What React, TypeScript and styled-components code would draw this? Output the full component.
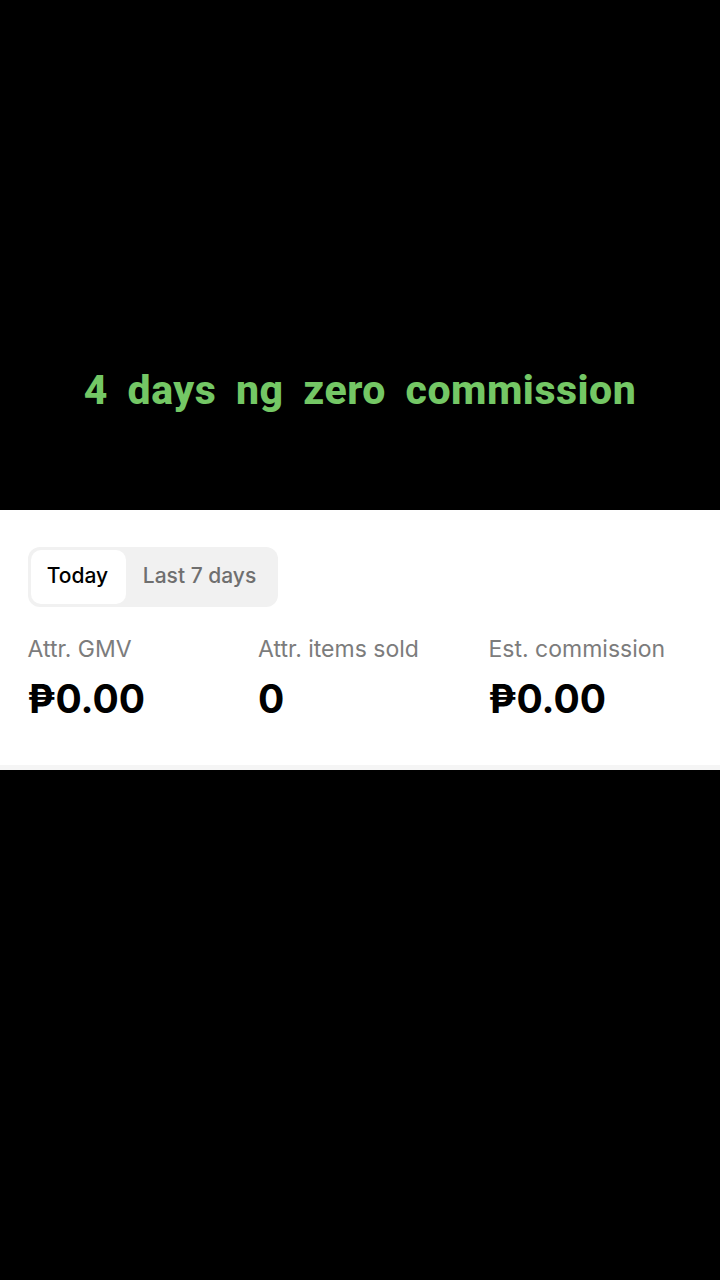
import React from "react";
import styled, { createGlobalStyle } from "styled-components";

const Global = createGlobalStyle`
  html, body { margin: 0; padding: 0; background: #000; }
  body { font-family: "Inter", "Liberation Sans", sans-serif; }
`;

const Page = styled.div`
  width: 720px;
  height: 1280px;
  background: #000;
  display: flex;
  flex-direction: column;
  overflow: hidden;
`;

const VideoTop = styled.div`
  height: 510px;
  padding-top: 363px;
  box-sizing: border-box;
  display: flex;
  justify-content: center;
  align-items: flex-start;
`;

const Caption = styled.div`
  font-family: "Roboto", "Noto Sans", sans-serif;
  font-weight: 800;
  font-size: 41px;
  line-height: 54px;
  color: #74c765;
  letter-spacing: 0.5px;
  word-spacing: 9px;
  white-space: nowrap;
`;

const Panel = styled.section`
  height: 260px;
  box-sizing: border-box;
  background: #fff;
  border-bottom: 5px solid #f5f5f5;
  padding: 37px 28px 0;
`;

const Tabs = styled.div`
  width: 250px;
  height: 60px;
  box-sizing: border-box;
  padding: 3px;
  border-radius: 12px;
  background: #f1f1f1;
  display: flex;
  align-items: stretch;
`;

const Tab = styled.div<{ $active?: boolean }>`
  width: ${(p) => (p.$active ? "95px" : "auto")};
  flex: ${(p) => (p.$active ? "none" : "1")};
  border-radius: 10px;
  padding: 0 2px 4px 0;
  box-sizing: border-box;
  background: ${(p) => (p.$active ? "#fff" : "transparent")};
  color: ${(p) => (p.$active ? "#000" : "#6f6f6f")};
  font-size: 21px;
  font-weight: 500;
  display: flex;
  align-items: center;
  justify-content: center;
  white-space: nowrap;
`;

const Metrics = styled.div`
  margin-top: 27px;
  margin-left: -0.5px;
  display: grid;
  grid-template-columns: 230.5px 230.5px 1fr;
`;

const Label = styled.div`
  font-size: 23px;
  line-height: 30px;
  color: #7c7c7c;
  white-space: nowrap;
`;

const Value = styled.div`
  margin-top: 12px;
  font-size: 39px;
  line-height: 46px;
  font-weight: 700;
  color: #000;
`;

const metrics = [
  { label: "Attr. GMV", value: "₱0.00" },
  { label: "Attr. items sold", value: "0" },
  { label: "Est. commission", value: "₱0.00" },
];

export default function App() {
  return (
    <Page>
      <Global />
      <VideoTop>
        <Caption>4 days ng zero commission</Caption>
      </VideoTop>
      <Panel>
        <Tabs>
          <Tab $active>Today</Tab>
          <Tab>Last 7 days</Tab>
        </Tabs>
        <Metrics>
          {metrics.map((m) => (
            <div key={m.label}>
              <Label>{m.label}</Label>
              <Value>{m.value}</Value>
            </div>
          ))}
        </Metrics>
      </Panel>
    </Page>
  );
}
